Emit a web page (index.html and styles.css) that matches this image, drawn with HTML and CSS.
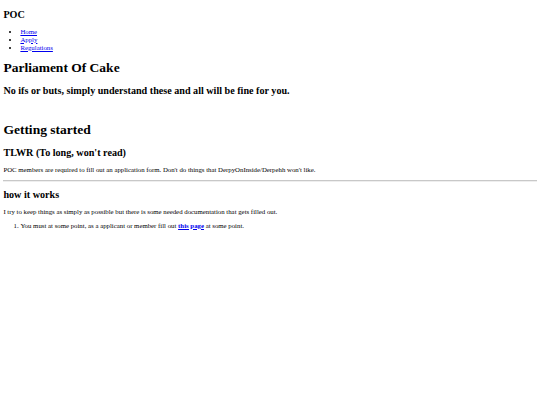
FILE: index.html
```html
<!DOCTYPE html>
<html lang="en">
<head>
<meta charset="UTF-8" />
<meta name="viewport" content="width=device-width, initial-scale=1.0">
<title>Parliament Of Cake</title>
<link rel="stylesheet" href="styles.css">
</head>
<body>
<header class="top">
    <h2 class="logo">POC</h2>
    <ul class="nav">
        <li><a href="#">Home</a></li>
        <li><a href="#">Apply</a></li>
        <li><a href="#">Regulations</a></li>
    </ul>
</header>
<div class="intro">
    <h1>Parliament Of Cake</h1>
    <h2>No ifs or buts, simply understand these and all will be fine for you.</h2>
</div>
<div class="content">
    <h1>Getting started</h1>
    <h2>TLWR (To long, won't read)</h2>
    <p>POC members are required to fill out an application form. Don't do things that DerpyOnInside/Derpehh won't like.</p>
    <hr>
    <h2>how it works</h2>
    <p>I try to keep things as simply as possible but there is some needed documentation that gets filled out.</p>
    <ol>
        <li>You must at some point, as a applicant or member fill out <a href="#"><b>this page</b></a> at some point.</li>
    </ol>
</div>
</body>
</html>
```
FILE: styles.css
```css
body {
    margin: 0 3.4px;
    padding-top: 1.4px;
    font-family: 'Liberation Serif', serif;
    font-size: 6.8px;
    color: #000;
}
h1 {
    font-size: 13.5px;
    margin: 9px 0;
}
h2 {
    font-size: 10.15px;
    margin: 8px 0;
}
.logo {
    margin-bottom: 7.4px;
}
.nav {
    margin-bottom: 5.8px;
}
.nav li {
    line-height: 8px;
}
.intro h1 {
    margin-top: 8px;
}
p {
    margin: 6.8px 0;
}
ul, ol {
    margin: 6.8px 0;
    padding-left: 17px;
}
a {
    color: #0000ee;
}
.intro {
    margin-bottom: 26.5px;
}
.content h2 {
    margin-top: 7px;
}
hr {
    border: none;
    border-top: 1px solid #c8c8c8;
    border-bottom: 1px solid #eee;
    margin: 3.4px 0;
}
```
